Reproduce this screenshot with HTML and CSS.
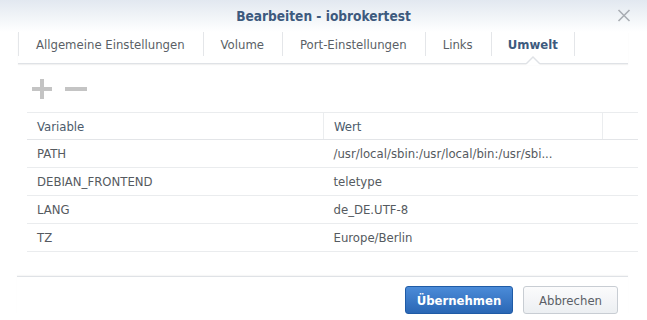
FILE: index.html
```html
<!DOCTYPE html>
<html lang="de">

<head>
    <meta charset="UTF-8">
    <meta name="viewport" content="width=device-width, initial-scale=1.0">
    <title>Bearbeiten - iobrokertest</title>
    <link rel="stylesheet" href="styles.css">
</head>

<body>
    <div class="dialog">
        <div class="titlebar">
            <span></span>
            <h1>Bearbeiten - iobrokertest</h1>
            <button class="close" title="Schließen">
                <svg width="14" height="13" viewBox="0 0 14 13">
                    <path d="M1.5 1 L12.5 12 M12.5 1 L1.5 12" stroke="#a9adb3" stroke-width="1.6" fill="none" />
                </svg>
            </button>
        </div>

        <ul class="tabs">
            <li>Allgemeine Einstellungen</li>
            <li>Volume</li>
            <li>Port-Einstellungen</li>
            <li>Links</li>
            <li class="active">Umwelt</li>
        </ul>

        <div class="panel">
            <div class="main">
                <div class="toolbar">
                    <span class="icon plus"></span>
                    <span class="icon minus"></span>
                </div>
                <table class="grid">
                    <thead>
                        <tr>
                            <th class="col-var">Variable</th>
                            <th class="col-val">Wert</th>
                            <th class="col-pad"></th>
                        </tr>
                    </thead>
                    <tbody>
                        <tr>
                            <td>PATH</td>
                            <td colspan="2">/usr/local/sbin:/usr/local/bin:/usr/sbi...</td>
                        </tr>
                        <tr>
                            <td>DEBIAN_FRONTEND</td>
                            <td colspan="2">teletype</td>
                        </tr>
                        <tr>
                            <td>LANG</td>
                            <td colspan="2">de_DE.UTF-8</td>
                        </tr>
                        <tr>
                            <td>TZ</td>
                            <td colspan="2">Europe/Berlin</td>
                        </tr>
                    </tbody>
                </table>
            </div>
            <div class="scrollbar"><div class="thumb"></div></div>
        </div>

        <div class="footer">
            <button class="btn primary">Übernehmen</button>
            <button class="btn">Abbrechen</button>
        </div>
    </div>
</body>

</html>
```

FILE: styles.css
```css
body {
    font-family: "DejaVu Sans Condensed", "DejaVu Sans", sans-serif;
    font-stretch: condensed;
    font-size: 13px;
    margin: 0;
    padding: 0;
    background-color: #ffffff;
    color: #555;
}

.dialog {
    width: 647px;
    height: 320px;
    background: #ffffff;
}

.titlebar {
    height: 32px;
    display: grid;
    grid-template-columns: 1fr auto 1fr;
    align-items: center;
    background: linear-gradient(to bottom, #e2e8f0 0%, #f3f6f9 60%, #ffffff 100%);
}

.titlebar h1 {
    margin: 0;
    font-size: 13.6px;
    font-weight: bold;
    color: #3d5a7e;
    line-height: 32px;
}

.close {
    justify-self: end;
    margin-right: 16px;
    margin-top: -1px;
    padding: 0;
    border: none;
    background: none;
    width: 14px;
    height: 13px;
    cursor: pointer;
}

.close svg {
    display: block;
}

.tabs {
    list-style: none;
    margin: 0 19px 0 18px;
    padding: 0 0 7px 0;
    display: flex;
    border-bottom: 1px solid #dfe2e6;
    box-shadow: 0 1px 1px rgba(0, 0, 0, 0.05);
}

.tabs li {
    position: relative;
    height: 24px;
    line-height: 25px;
    padding: 0 18px 0 17px;
    border-left: 1px solid #e4e6e9;
    color: #5a5f66;
}

.tabs li.active {
    font-weight: bold;
    color: #3d5a7e;
    border-right: 1px solid #e4e6e9;
    padding: 0 16px 0 16px;
}

.tabs li.active::before,
.tabs li.active::after {
    content: "";
    position: absolute;
    left: 50%;
    width: 0;
    height: 0;
    border-style: solid;
    border-color: transparent;
}

.tabs li.active::before {
    bottom: -8px;
    margin-left: -8px;
    border-width: 0 8px 8px 8px;
    border-bottom-color: #dfe2e6;
}

.tabs li.active::after {
    bottom: -9px;
    margin-left: -7px;
    border-width: 0 7px 7px 7px;
    border-bottom-color: #ffffff;
}

.panel {
    display: flex;
    padding-left: 27px;
    padding-right: 20px;
}

.main {
    flex: 1;
}

.toolbar {
    display: flex;
    align-items: center;
    gap: 13px;
    height: 20px;
    padding: 15px 0 0 5px;
    margin-bottom: 13px;
}

.icon {
    position: relative;
    width: 20px;
    height: 20px;
    display: block;
}

.icon::before,
.icon::after {
    content: "";
    position: absolute;
    background: #c4c4c4;
}

.plus::before {
    left: 0;
    top: 8px;
    width: 20px;
    height: 4px;
}

.plus::after {
    left: 8px;
    top: 0;
    width: 4px;
    height: 20px;
}

.minus {
    width: 22px;
}

.minus::before {
    left: 0;
    top: 8px;
    width: 22px;
    height: 4px;
}

.minus::after {
    display: none;
}

.grid {
    width: 591px;
    border-collapse: collapse;
    table-layout: fixed;
}

.grid th,
.grid td {
    text-align: left;
    font-weight: normal;
    padding: 0 10px;
    white-space: nowrap;
    overflow: hidden;
}

.grid th {
    height: 26px;
    color: #4b5b6c;
    border-top: 1px solid #eaecee;
    border-bottom: 1px solid #e3e5e8;
}

.grid th + th {
    border-left: 1px solid #ebedef;
}

.col-var {
    width: 276px;
}

.col-val {
    width: 258px;
}

.col-pad {
    width: 15px;
    padding: 0;
}

.grid td {
    height: 27px;
    color: #555a60;
    border-bottom: 1px solid #eaecee;
}

.scrollbar {
    width: 9px;
    margin-left: 1px;
    padding-top: 8px;
}

.thumb {
    height: 96px;
    background: #d3d3d3;
}

.footer {
    margin: 24px 19px 0 17px;
    padding: 9px 10px 0 0;
    border-top: 1px solid #dfe2e6;
    box-shadow: 0 -1px 1px rgba(0, 0, 0, 0.03);
    display: flex;
    justify-content: flex-end;
    gap: 10px;
}

.btn {
    font-family: inherit;
    font-stretch: condensed;
    font-size: 13px;
    height: 28px;
    width: 95px;
    padding: 0;
    color: #5a5f66;
    border: 1px solid #c8cdd3;
    border-radius: 3px;
    background: linear-gradient(to bottom, #fbfbfc 0%, #eceff2 100%);
    cursor: pointer;
}

.btn.primary {
    width: 108px;
    color: #ffffff;
    font-weight: bold;
    border-color: #1f5ba6;
    background: linear-gradient(to bottom, #4b8bd8 0%, #2a67b5 100%);
}
```
